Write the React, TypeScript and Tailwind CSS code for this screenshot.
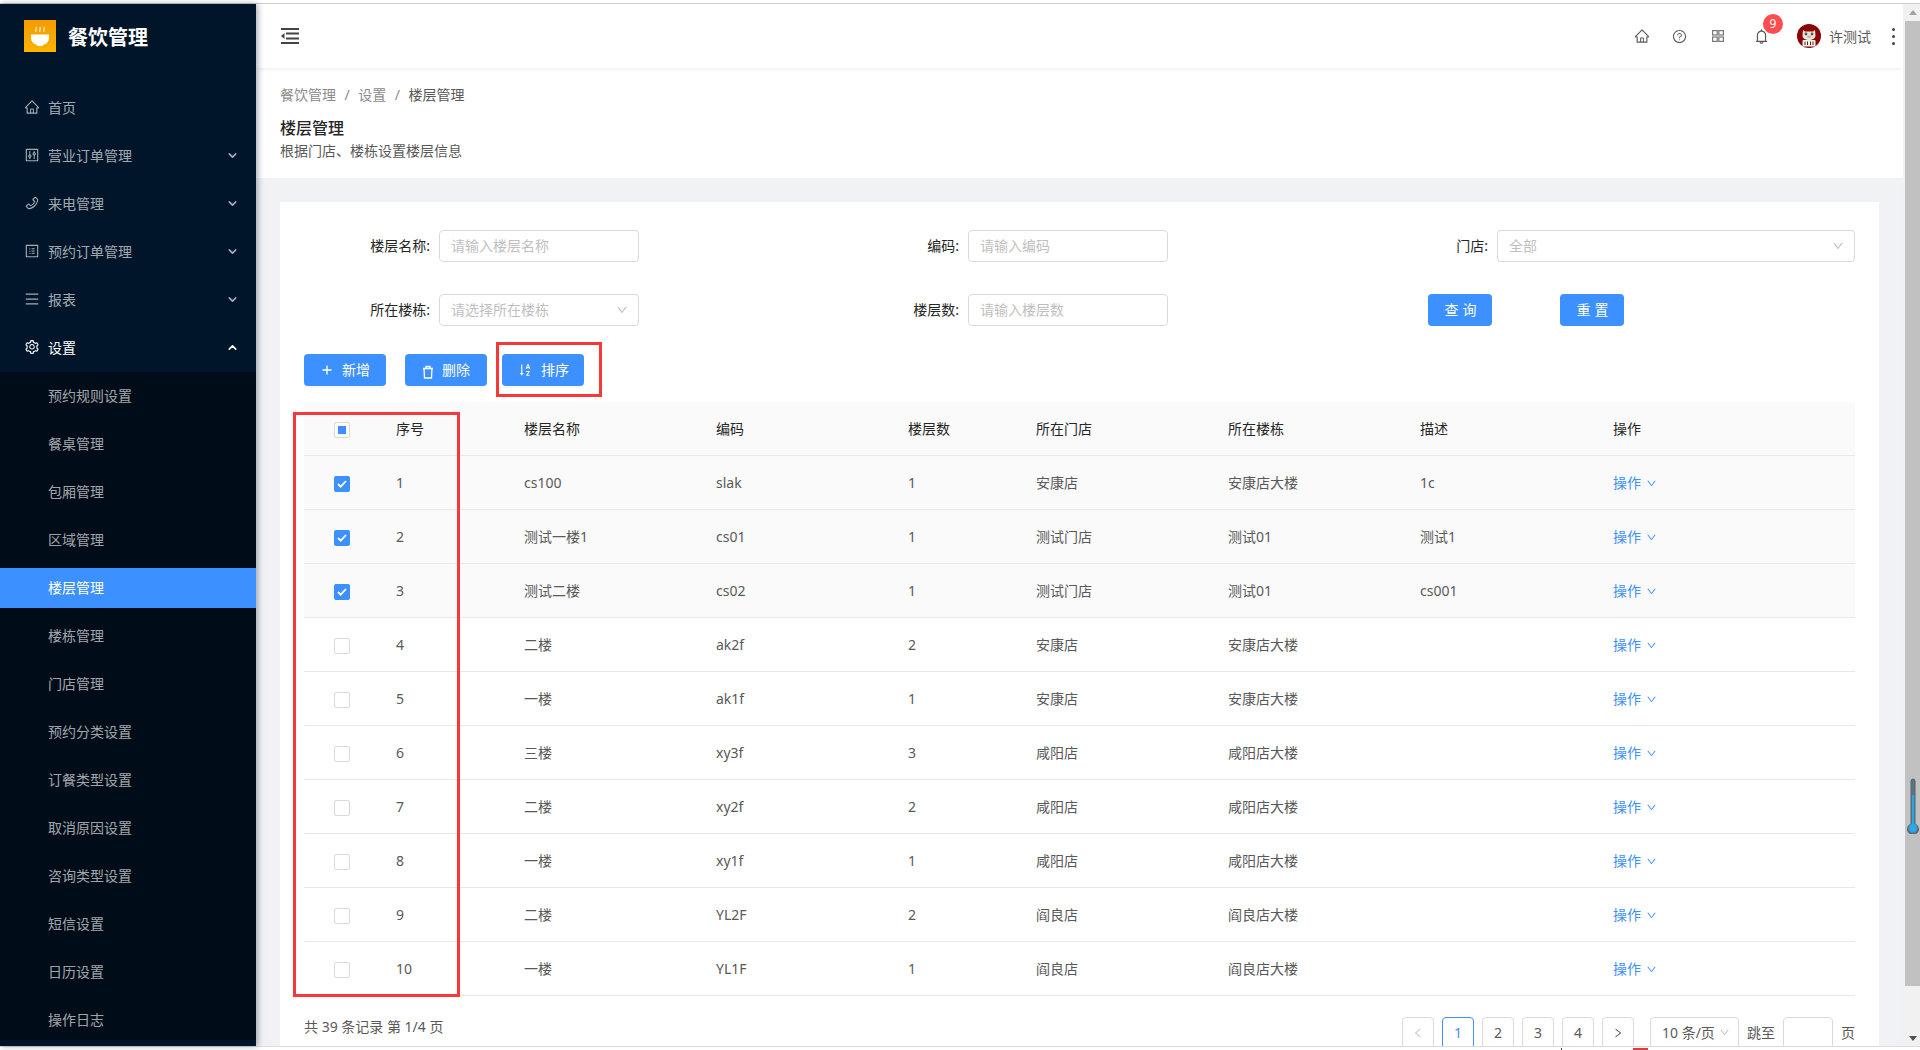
import React from "react";
import {
  AiOutlineHome,
  AiOutlineQuestionCircle,
  AiOutlineBell,
  AiOutlineSetting,
  AiOutlineControl,
  AiOutlinePhone,
  AiOutlineProfile,
  AiOutlineMenu,
  AiOutlineSortAscending,
  AiOutlineDown,
  AiOutlineLeft,
  AiOutlineRight,
} from "react-icons/ai";
import { ChevronDown, ChevronUp, Plus } from "lucide-react";

const topMenu = [
  { label: "首页", icon: <AiOutlineHome size={16} /> },
  { label: "营业订单管理", icon: <AiOutlineControl size={16} />, arrow: true },
  { label: "来电管理", icon: <AiOutlinePhone size={16} />, arrow: true },
  { label: "预约订单管理", icon: <AiOutlineProfile size={16} />, arrow: true },
  { label: "报表", icon: <AiOutlineMenu size={16} />, arrow: true },
];

const subMenu = [
  "预约规则设置",
  "餐桌管理",
  "包厢管理",
  "区域管理",
  "楼层管理",
  "楼栋管理",
  "门店管理",
  "预约分类设置",
  "订餐类型设置",
  "取消原因设置",
  "咨询类型设置",
  "短信设置",
  "日历设置",
  "操作日志",
];

const rows = [
  ["1", "cs100", "slak", "1", "安康店", "安康店大楼", "1c", true],
  ["2", "测试一楼1", "cs01", "1", "测试门店", "测试01", "测试1", true],
  ["3", "测试二楼", "cs02", "1", "测试门店", "测试01", "cs001", true],
  ["4", "二楼", "ak2f", "2", "安康店", "安康店大楼", "", false],
  ["5", "一楼", "ak1f", "1", "安康店", "安康店大楼", "", false],
  ["6", "三楼", "xy3f", "3", "咸阳店", "咸阳店大楼", "", false],
  ["7", "二楼", "xy2f", "2", "咸阳店", "咸阳店大楼", "", false],
  ["8", "一楼", "xy1f", "1", "咸阳店", "咸阳店大楼", "", false],
  ["9", "二楼", "YL2F", "2", "阎良店", "阎良店大楼", "", false],
  ["10", "一楼", "YL1F", "1", "阎良店", "阎良店大楼", "", false],
] as const;

function Logo() {
  return (
    <svg width="32" height="32" viewBox="0 0 32 32" className="shrink-0">
      <defs>
        <linearGradient id="lg" x1="0" y1="0" x2="0" y2="1">
          <stop offset="0" stopColor="#f59a00" />
          <stop offset="1" stopColor="#fbb400" />
        </linearGradient>
      </defs>
      <rect width="32" height="32" fill="url(#lg)" />
      <path d="M7 14.5h18v3.500c0 3.600-3 6.500-6 6.800v1.200h-6v-1.200c-3-.3-6-3.200-6-6.800z" fill="#fff" />
      <path d="M12 12c-1.200-1.600 1-2.400 0-5M16 12c-1.200-1.600 1-2.400 0-5M20 12c-1.200-1.600 1-2.400 0-5" stroke="#fff" strokeWidth="1.200" fill="none" opacity=".85" />
    </svg>
  );
}

function Fold() {
  return (
    <svg width="18" height="16" viewBox="0 0 18 16" className="text-[#444]">
      <rect x="0" y="0" width="18" height="2" fill="currentColor" />
      <rect x="5" y="4.500" width="13" height="2" fill="currentColor" />
      <rect x="5" y="9.500" width="13" height="2" fill="currentColor" />
      <rect x="0" y="14" width="18" height="2" fill="currentColor" />
      <path d="M3.500 5v6L0 8z" fill="currentColor" />
    </svg>
  );
}

function GridIcon() {
  return (
    <svg width="12" height="12" viewBox="0 0 12 12" fill="none" stroke="#777" strokeWidth="1.200">
      <rect x=".6" y=".6" width="4.600" height="4.400" />
      <rect x="6.800" y=".6" width="4.600" height="4.400" />
      <rect x=".6" y="7" width="4.600" height="4.400" />
      <rect x="6.800" y="7" width="4.600" height="4.400" />
    </svg>
  );
}

function Avatar() {
  return (
    <svg width="24" height="24" viewBox="0 0 24 24" className="shrink-0">
      <circle cx="12" cy="12" r="12" fill="#8c0505" />
      <path d="M6 6l2 1.500h8L18 6l.5 5.500c0 3-3 4.500-6.500 4.500s-6.500-1.500-6.500-4.500z" fill="#efe6d8" />
      <circle cx="9" cy="10" r="1.400" fill="#555" />
      <circle cx="15" cy="10" r="1.400" fill="#555" />
      <ellipse cx="12" cy="12.800" rx="2" ry="1.200" fill="#c9b7a2" />
      <rect x="5.500" y="16" width="13" height="6.500" rx="1" fill="#f5f1ea" />
      <path d="M8 17.500v3.500M10.500 17.500v3.500M13.500 17.500v3.500M16 17.500v3.500" stroke="#333" strokeWidth="1" />
    </svg>
  );
}

function TrashIcon() {
  return (
    <svg width="12" height="14" viewBox="0 0 12 14" fill="none" stroke="#fff" strokeWidth="1.300" className="mt-[3px]">
      <path d="M1 3.500h10M4 3V1.500h4V3M2 3.500l.5 9.500h7l.5-9.500" />
    </svg>
  );
}

function Input({ placeholder, width }: { placeholder: string; width: string }) {
  return (
    <div className={`flex h-8 items-center rounded border border-[#d9d9d9] bg-white px-[11px] pb-[2px] text-[14px] text-[#bfbfbf] ${width}`}>
      {placeholder}
    </div>
  );
}

function Select({ placeholder, width }: { placeholder: string; width: string }) {
  return (
    <div className={`flex h-8 items-center justify-between rounded border border-[#d9d9d9] bg-white pl-[11px] pr-[10px] text-[14px] text-[#bfbfbf] ${width}`}>
      <span className="pb-[2px]">{placeholder}</span>
      <AiOutlineDown size={12} className="text-[#b5b5b5]" />
    </div>
  );
}

function Label({ children }: { children: React.ReactNode }) {
  return <div className="mr-[9px] w-[127px] shrink-0 pb-[2px] text-right text-[14px] text-[#262626]">{children}</div>;
}

function ActionButton({ icon, label, className }: { icon: React.ReactNode; label: string; className: string }) {
  return (
    <div className={`flex h-8 w-[82px] items-center justify-center gap-2 rounded bg-[#3c90ff] text-[14px] text-white shadow-[0_2px_0_rgba(0,0,0,0.03)] ${className}`}>
      {icon}
      <span className="pb-[2px]">{label}</span>
    </div>
  );
}

function PageBox({ children, active, dim }: { children: React.ReactNode; active?: boolean; dim?: boolean }) {
  const tone = active
    ? "border-[#3c90ff] text-[#3c90ff]"
    : dim
      ? "border-[#d9d9d9] text-[#c4c4c4]"
      : "border-[#d9d9d9] text-[#595959]";
  return <div className={`flex h-8 w-8 items-center justify-center rounded border text-[14px] ${tone}`}>{children}</div>;
}

function Check({ state }: { state: "on" | "off" | "mixed" }) {
  if (state === "on") {
    return (
      <div className="mt-[3px] flex h-4 w-4 items-center justify-center rounded-[2px] bg-[#3c90ff]">
        <svg width="10" height="8" viewBox="0 0 10 8" fill="none" stroke="#fff" strokeWidth="1.800">
          <path d="M1 4l2.700 2.700L9 1" />
        </svg>
      </div>
    );
  }
  return (
    <div className="mt-[3px] flex h-4 w-4 items-center justify-center rounded-[2px] border border-[#d9d9d9] bg-white">
      {state === "mixed" && <div className="h-2 w-2 bg-[#3c90ff]" />}
    </div>
  );
}

const th = "px-4 text-left font-normal text-[#262626]";
const td = "px-4 text-[#595959]";

export default function App() {
  return (
    <div className="flex h-[1050px] w-[1920px] flex-col overflow-hidden bg-white font-['Noto_Sans','Noto_Sans_CJK_SC',sans-serif] text-[14px]">
      <div className="h-1 shrink-0 border-b border-[#cfcfcf] bg-white" />
      <div className="flex h-[1042px] shrink-0">
        <aside className="z-10 w-[256px] shrink-0 overflow-hidden bg-[#001529] text-[rgba(255,255,255,0.65)] shadow-[2px_0_6px_rgba(0,21,41,0.35)]">
          <div className="flex h-16 items-center gap-3 pl-6">
            <Logo />
            <span className="pt-[3px] text-[20px] font-bold text-white">餐饮管理</span>
          </div>
          <div className="pt-[19px]">
            {topMenu.map((m) => (
              <div key={m.label} className="mb-2 flex h-10 items-center pl-6 pr-[17px]">
                <span className="flex w-6 shrink-0 items-center">{m.icon}</span>
                <span className="flex-1">{m.label}</span>
                {m.arrow && <ChevronDown size={13} strokeWidth={3} />}
              </div>
            ))}
            <div className="flex h-10 items-center pl-6 pr-[17px] text-white">
              <span className="flex w-6 shrink-0 items-center">
                <AiOutlineSetting size={16} />
              </span>
              <span className="flex-1">设置</span>
              <ChevronUp size={13} strokeWidth={3} />
            </div>
            <div className="mt-[5px] bg-[#000c17] pt-1">
              {subMenu.map((s) => (
                <div
                  key={s}
                  className={
                    s === "楼层管理"
                      ? "mb-2 flex h-10 items-center bg-[#3c90ff] pb-[1px] pl-12 text-white"
                      : "mb-2 flex h-10 items-center pb-[2px] pl-12"
                  }
                >
                  {s}
                </div>
              ))}
            </div>
          </div>
        </aside>

        <main className="flex min-w-0 flex-1 flex-col overflow-hidden bg-[#f0f2f5]">
          <header className="z-[5] flex h-16 shrink-0 items-center justify-between bg-white pl-[25px] pr-[8px] shadow-[0_1px_4px_rgba(0,21,41,0.08)]">
            <Fold />
            <div className="flex items-center">
              <AiOutlineHome size={16} className="text-[#595959]" />
              <AiOutlineQuestionCircle size={15} className="ml-[22px] text-[#595959]" />
              <span className="ml-[25px]">
                <GridIcon />
              </span>
              <span className="relative ml-[29px] flex text-[#595959]">
                <AiOutlineBell size={17} />
                <span className="absolute left-[10px] top-[-14px] flex h-5 w-5 items-center justify-center rounded-full bg-[#ff4d4f] text-[12px] text-white">
                  9
                </span>
              </span>
              <span className="ml-[27px]">
                <Avatar />
              </span>
              <span className="ml-2 text-[14px] text-[#595959]">许测试</span>
              <span className="ml-[21px] flex flex-col gap-[4px]">
                <span className="h-[3px] w-[3px] rounded-full bg-[#444]" />
                <span className="h-[3px] w-[3px] rounded-full bg-[#444]" />
                <span className="h-[3px] w-[3px] rounded-full bg-[#444]" />
              </span>
            </div>
          </header>

          <section className="h-[110px] shrink-0 bg-white px-6 pt-[15px]">
            <div className="flex h-[22px] items-center gap-[8.5px] text-[14px] text-[#8c8c8c]">
              <span>餐饮管理</span>
              <span>/</span>
              <span>设置</span>
              <span>/</span>
              <span className="text-[#595959]">楼层管理</span>
            </div>
            <div className="mt-[12px] text-[16px] font-medium leading-[22px] text-[#262626]">楼层管理</div>
            <div className="mt-[1px] text-[14px] leading-[22px] text-[#595959]">根据门店、楼栋设置楼层信息</div>
          </section>

          <div className="min-h-0 flex-1 px-6 pt-6">
            <div className="relative h-[900px] bg-white px-6 pt-7">
              <div className="grid grid-cols-[528px_529px_1fr] gap-y-8">
                <div className="-ml-px flex items-center">
                  <Label>楼层名称:</Label>
                  <Input placeholder="请输入楼层名称" width="w-[200px]" />
                </div>
                <div className="flex items-center">
                  <Label>编码:</Label>
                  <Input placeholder="请输入编码" width="w-[200px]" />
                </div>
                <div className="flex items-center">
                  <Label>门店:</Label>
                  <Select placeholder="全部" width="flex-1" />
                </div>
                <div className="-ml-px flex items-center">
                  <Label>所在楼栋:</Label>
                  <Select placeholder="请选择所在楼栋" width="w-[200px]" />
                </div>
                <div className="flex items-center">
                  <Label>楼层数:</Label>
                  <Input placeholder="请输入楼层数" width="w-[200px]" />
                </div>
                <div className="flex items-center gap-[68px] pl-[67px]">
                  <div className="flex h-8 w-16 items-center justify-center rounded bg-[#3c90ff] pb-[1px] pl-[5px] tracking-[4px] text-white">查询</div>
                  <div className="flex h-8 w-16 items-center justify-center rounded bg-[#3c90ff] pb-[1px] pl-[5px] tracking-[4px] text-white">重置</div>
                </div>
              </div>

              <div className="mt-7 flex">
                <ActionButton icon={<Plus size={14} strokeWidth={2.400} />} label="新增" className="" />
                <ActionButton icon={<TrashIcon />} label="删除" className="ml-[19px]" />
                <ActionButton icon={<AiOutlineSortAscending size={16} />} label="排序" className="ml-[15px]" />
              </div>

              <table className="mt-4 w-[1551px] table-fixed border-collapse">
                <thead>
                  <tr className="h-[53px] border-b border-[#e8e8e8] bg-[#fafafa]">
                    <th className="w-[76px] pl-[30px]">
                      <Check state="mixed" />
                    </th>
                    <th className={`${th} w-[128px]`}>序号</th>
                    <th className={`${th} w-[192px]`}>楼层名称</th>
                    <th className={`${th} w-[192px]`}>编码</th>
                    <th className={`${th} w-[128px]`}>楼层数</th>
                    <th className={`${th} w-[192px]`}>所在门店</th>
                    <th className={`${th} w-[192px]`}>所在楼栋</th>
                    <th className={`${th} w-[193px]`}>描述</th>
                    <th className={th}>操作</th>
                  </tr>
                </thead>
                <tbody>
                  {rows.map((r) => (
                    <tr key={r[0]} className={r[7] ? "h-[54px] border-b border-[#e8e8e8] bg-[#fafafa]" : "h-[54px] border-b border-[#e8e8e8]"}>
                      <td className="pl-[30px]">
                        <Check state={r[7] ? "on" : "off"} />
                      </td>
                      <td className={td}>{r[0]}</td>
                      <td className={td}>{r[1]}</td>
                      <td className={td}>{r[2]}</td>
                      <td className={td}>{r[3]}</td>
                      <td className={td}>{r[4]}</td>
                      <td className={td}>{r[5]}</td>
                      <td className={td}>{r[6]}</td>
                      <td className="px-4 text-[#3c90ff]">
                        <span className="inline-flex items-center gap-[5px]">
                          操作
                          <AiOutlineDown size={11} className="mt-[3px]" />
                        </span>
                      </td>
                    </tr>
                  ))}
                </tbody>
              </table>

              <div className="mt-[21px] flex items-start justify-between">
                <div className="leading-[20px] text-[#595959]">共 39 条记录 第 1/4 页</div>
                <div className="flex items-center">
                  <div className="flex gap-2">
                    <PageBox dim>
                      <AiOutlineLeft size={12} />
                    </PageBox>
                    <PageBox active>1</PageBox>
                    <PageBox>2</PageBox>
                    <PageBox>3</PageBox>
                    <PageBox>4</PageBox>
                    <PageBox>
                      <AiOutlineRight size={12} />
                    </PageBox>
                  </div>
                  <div className="ml-4 flex h-8 w-[89px] items-center justify-between rounded border border-[#d9d9d9] pl-[11px] pr-2 text-[#595959]">
                    <span className="whitespace-nowrap">10 条/页</span>
                    <AiOutlineDown size={11} className="shrink-0 text-[#bfbfbf]" />
                  </div>
                  <span className="ml-2 text-[#595959]">跳至</span>
                  <div className="ml-2 h-8 w-[50px] rounded border border-[#d9d9d9]" />
                  <span className="ml-2 text-[#595959]">页</span>
                </div>
              </div>

              <div className="absolute left-[216px] top-[140px] h-[55px] w-[106px] border-[3px] border-[#f73838]" />
              <div className="absolute left-[13px] top-[210px] h-[585px] w-[167px] border-[3px] border-[#f73838]" />
            </div>
          </div>
        </main>

        <div className="relative flex w-[17px] shrink-0 flex-col bg-[#f1f1f1] pl-[2px]">
          <div className="flex h-[17px] shrink-0 items-center justify-center">
            <div className="h-0 w-0 border-x-[4px] border-b-[5px] border-x-transparent border-b-[#a3a3a3]" />
          </div>
          <div className="h-[965px] shrink-0 bg-[#c1c1c1]" />
          <div className="flex flex-1 items-end justify-center pb-[5px]">
            <div className="h-0 w-0 border-x-[4px] border-t-[5px] border-x-transparent border-t-[#505050]" />
          </div>
          <svg width="14" height="56" viewBox="0 0 14 56" className="absolute left-[3px] top-[774px]">
            <path d="M7 1a2 2 0 0 1 2 2v43a5.500 5.500 0 1 1-4 0V3a2 2 0 0 1 2-2z" fill="#5d7480" stroke="#54626c" strokeWidth="1" />
            <rect x="6" y="17" width="2.200" height="32" fill="#2aa4e4" />
            <circle cx="7" cy="50" r="4.300" fill="#2aa9ea" />
          </svg>
        </div>
      </div>
      <div className="relative h-1 shrink-0 border-t border-[#dcdcdc] bg-white">
        <div className="absolute left-[1561px] top-[1px] h-[2px] w-[1px] bg-[#444]" />
        <div className="absolute left-[1633px] top-[1px] h-[3px] w-[15px] bg-[#e23b3b]" />
      </div>
    </div>
  );
}
